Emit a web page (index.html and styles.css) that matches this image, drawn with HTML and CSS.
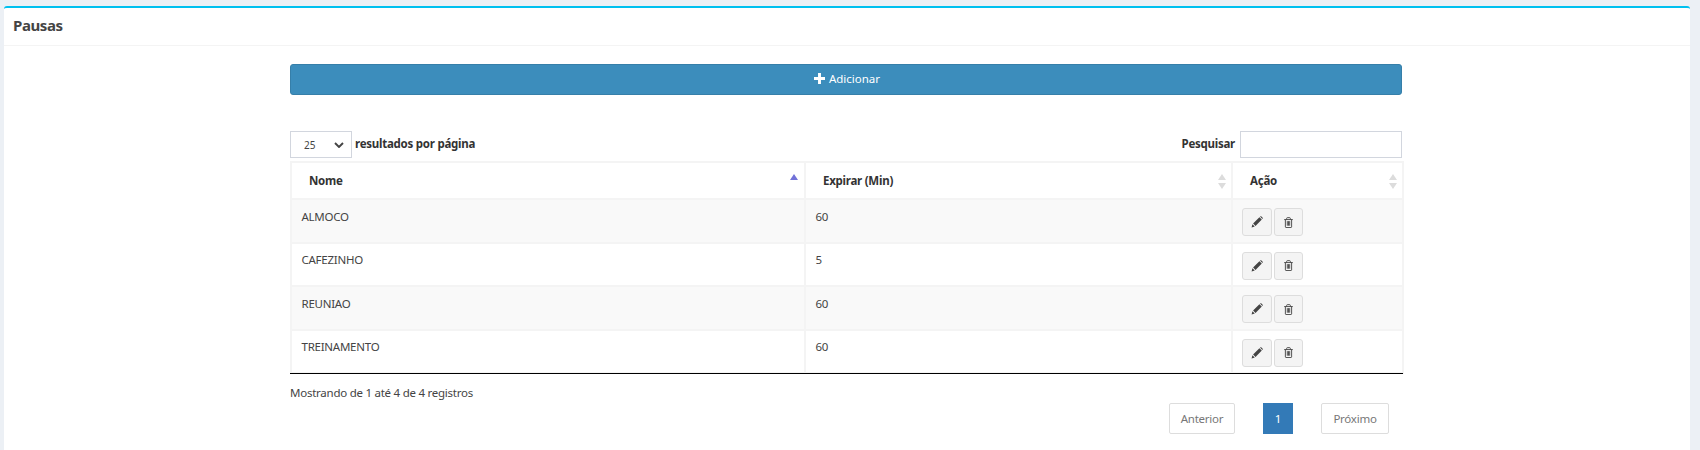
FILE: index.html
```html
<!DOCTYPE html>
<html lang="pt">
<head>
<meta charset="utf-8">
<title>Pausas</title>
<link rel="stylesheet" href="styles.css">
</head>
<body>
<section class="card">
  <header class="card-head"><h3>Pausas</h3></header>
  <div class="card-body">
    <div class="content">
      <button class="add-btn"><svg class="plus" viewBox="0 0 12 12"><path d="M4.4 0h3.2v4.4H12v3.200H7.600V12H4.400V7.600H0V4.400h4.400z"/></svg><span>Adicionar</span></button>
      <div class="controls">
        <label class="length"><span class="select"><span>25</span><svg viewBox="0 0 10 6"><path d="M1 1l4 4 4-4" fill="none" stroke="#444" stroke-width="1.9"/></svg></span><span class="lbl">resultados por página</span></label>
        <label class="search"><span class="lbl">Pesquisar</span><input type="text"></label>
      </div>
      <table>
        <colgroup><col class="c1"><col class="c2"><col class="c3"></colgroup>
        <thead>
          <tr>
            <th>Nome<span class="sort active"><i class="up"></i></span></th>
            <th>Expirar (Min)<span class="sort"><i class="up"></i><i class="down"></i></span></th>
            <th>Ação<span class="sort"><i class="up"></i><i class="down"></i></span></th>
          </tr>
        </thead>
        <tbody>
          <tr class="odd"><td>ALMOCO</td><td>60</td><td class="actions"><button class="ic edit"><svg viewBox="0 0 12 12"><path d="M.6 11.400l.8-3.200 2.400 2.400zM2.100 7.500L8.400 1.200l2.400 2.400-6.300 6.300zM9.100.5c.4-.4 1-.4 1.300 0l1.100 1.100c.4.4.4.9 0 1.300l-.1.1-2.400-2.400z"/></svg></button><button class="ic del"><svg viewBox="0 0 12 12"><path d="M1.300 2.800h9.400M2.600 2.800v8c0 .4.300.7.700.7h5.400c.4 0 .7-.3.700-.7v-8M4 2.800V1.500c0-.4.300-.8.700-.8h2.600c.4 0 .7.400.7.800v1.300M4.700 4.500v5M6 4.500v5M7.300 4.500v5"/></svg></button></td></tr>
          <tr><td>CAFEZINHO</td><td>5</td><td class="actions"><button class="ic edit"><svg viewBox="0 0 12 12"><path d="M.6 11.400l.8-3.200 2.400 2.400zM2.100 7.500L8.400 1.200l2.400 2.400-6.300 6.300zM9.100.5c.4-.4 1-.4 1.300 0l1.100 1.100c.4.4.4.9 0 1.300l-.1.1-2.400-2.400z"/></svg></button><button class="ic del"><svg viewBox="0 0 12 12"><path d="M1.300 2.800h9.400M2.600 2.800v8c0 .4.300.7.700.7h5.400c.4 0 .7-.3.700-.7v-8M4 2.800V1.500c0-.4.300-.8.700-.8h2.600c.4 0 .7.400.7.800v1.300M4.700 4.500v5M6 4.500v5M7.300 4.500v5"/></svg></button></td></tr>
          <tr class="odd"><td>REUNIAO</td><td>60</td><td class="actions"><button class="ic edit"><svg viewBox="0 0 12 12"><path d="M.6 11.400l.8-3.200 2.400 2.400zM2.100 7.500L8.400 1.200l2.400 2.400-6.300 6.300zM9.100.5c.4-.4 1-.4 1.300 0l1.100 1.100c.4.4.4.9 0 1.300l-.1.1-2.400-2.400z"/></svg></button><button class="ic del"><svg viewBox="0 0 12 12"><path d="M1.300 2.800h9.400M2.600 2.800v8c0 .4.300.7.700.7h5.400c.4 0 .7-.3.700-.7v-8M4 2.800V1.500c0-.4.300-.8.700-.8h2.600c.4 0 .7.400.7.800v1.300M4.700 4.500v5M6 4.500v5M7.300 4.500v5"/></svg></button></td></tr>
          <tr><td>TREINAMENTO</td><td>60</td><td class="actions"><button class="ic edit"><svg viewBox="0 0 12 12"><path d="M.6 11.400l.8-3.200 2.400 2.400zM2.100 7.500L8.400 1.200l2.400 2.400-6.300 6.300zM9.100.5c.4-.4 1-.4 1.300 0l1.100 1.100c.4.4.4.9 0 1.300l-.1.1-2.400-2.400z"/></svg></button><button class="ic del"><svg viewBox="0 0 12 12"><path d="M1.300 2.800h9.400M2.600 2.800v8c0 .4.300.7.700.7h5.400c.4 0 .7-.3.700-.7v-8M4 2.800V1.500c0-.4.300-.8.700-.8h2.600c.4 0 .7.400.7.800v1.300M4.700 4.500v5M6 4.500v5M7.300 4.500v5"/></svg></button></td></tr>
        </tbody>
      </table>
      <div class="table-rule"></div>
      <p class="info">Mostrando de 1 até 4 de 4 registros</p>
      <nav class="pager"><a class="pg prev">Anterior</a><a class="pg cur">1</a><a class="pg next">Próximo</a></nav>
    </div>
  </div>
</section>
</body>
</html>
```
FILE: styles.css
```css
* { box-sizing: border-box; }
html, body { height: 100%; }
body {
  margin: 0;
  padding: 6px 10px 0 4px;
  background: #ecf0f5;
  font-family: "Noto Sans", "Open Sans", sans-serif;
  font-size: 11.500px;
  letter-spacing: -0.250px;
  color: #333;
  overflow: hidden;
}
.card {
  background: #fff;
  border-top: 2px solid #00c0ef;
  border-radius: 3px 3px 0 0;
  height: 444px;
}
.card-head {
  height: 38px;
  border-bottom: 1px solid #f4f4f4;
  padding: 0 9px;
  display: flex;
  align-items: center;
}
.card-head h3 { margin: 0 0 3px; font-size: 15px; letter-spacing: -0.400px; font-weight: 700; color: #444; }
.card-body { padding: 18px 0 0 286px; }
.content { width: 1114px; }
.add-btn {
  display: flex;
  align-items: center;
  justify-content: center;
  gap: 4px;
  width: 1112px;
  height: 31px;
  padding: 0 0 2px 2px;
  background: #3c8dbc;
  border: 1px solid #367fa9;
  border-radius: 3px;
  color: #fff;
  font: 11.500px "Noto Sans", sans-serif;
  letter-spacing: 0;
}
.plus { width: 11px; height: 11px; fill: #fff; }
.controls {
  display: flex;
  justify-content: space-between;
  align-items: center;
  width: 1112px;
  margin-top: 36px;
  height: 27px;
}
.length, .search { display: flex; align-items: center; font-weight: 700; color: #333; }
.lbl { margin-top: -2px; }
.select {
  display: flex;
  align-items: center;
  justify-content: space-between;
  width: 62px;
  height: 27px;
  padding: 0 7px 0 13px;
  margin-right: 3px;
  border: 1px solid #d2d6de;
  font-size: 10px;
  letter-spacing: 0;
  font-weight: 400;
  color: #444;
}
.select svg { width: 10px; height: 6px; }
.search input {
  width: 162px;
  height: 27px;
  margin-left: 5px;
  padding: 0 6px;
  border: 1px solid #d2d6de;
  background: #fff;
}
table {
  width: 1112px;
  margin-top: 3px;
  border-collapse: collapse;
  table-layout: fixed;
}
.c1 { width: 514px; }
.c2 { width: 427px; }
.c3 { width: 171px; }
th, td { border: 2px solid #f4f4f4; text-align: left; }
th {
  position: relative;
  height: 37px;
  padding: 0 17px;
  font-weight: 700;
  color: #333;
}
td { height: 43.500px; padding: 0 9.500px 9px; color: #444; }
.odd td { background: #f9f9f9; }
td.actions { padding: 8px 0 0 9px; vertical-align: top; }
.table-rule { width: 1113px; height: 1px; margin-top: -1px; position: relative; background: #000; }
.sort { position: absolute; right: 5px; top: 11px; width: 8px; height: 15px; }
.sort i { position: absolute; left: 0; border-left: 4px solid transparent; border-right: 4px solid transparent; }
.sort .up { top: 0; border-bottom: 6px solid #dcdcdc; }
.sort .down { bottom: 0; border-top: 6px solid #dcdcdc; }
.sort.active { right: 6px; top: 11px; }
.sort.active .up { border-bottom-color: #7272d8; }
.ic {
  width: 30px;
  height: 28px;
  padding: 0;
  margin-right: 2px;
  display: inline-flex;
  align-items: center;
  justify-content: center;
  vertical-align: top;
  background: #f4f4f4;
  border: 1px solid #ddd;
  border-radius: 3px;
}
.ic.del { width: 29px; }
.edit svg { width: 12px; height: 12px; fill: #444; }
.del svg { width: 11px; height: 11px; fill: none; stroke: #444; stroke-width: 1; }
.info { margin: 10px 0 0; line-height: 17px; color: #444; }
.pager { display: flex; margin: 2px 0 0 879px; height: 31px; }
.pg {
  display: flex;
  align-items: center;
  justify-content: center;
  height: 31px;
  border: 1px solid #ddd;
  border-radius: 2px;
  color: #777;
}
.prev { width: 66px; }
.cur { width: 30px; margin: 0 28px; background: #337ab7; border: 0; border-radius: 0; color: #fff; }
.next { width: 68px; }
```
